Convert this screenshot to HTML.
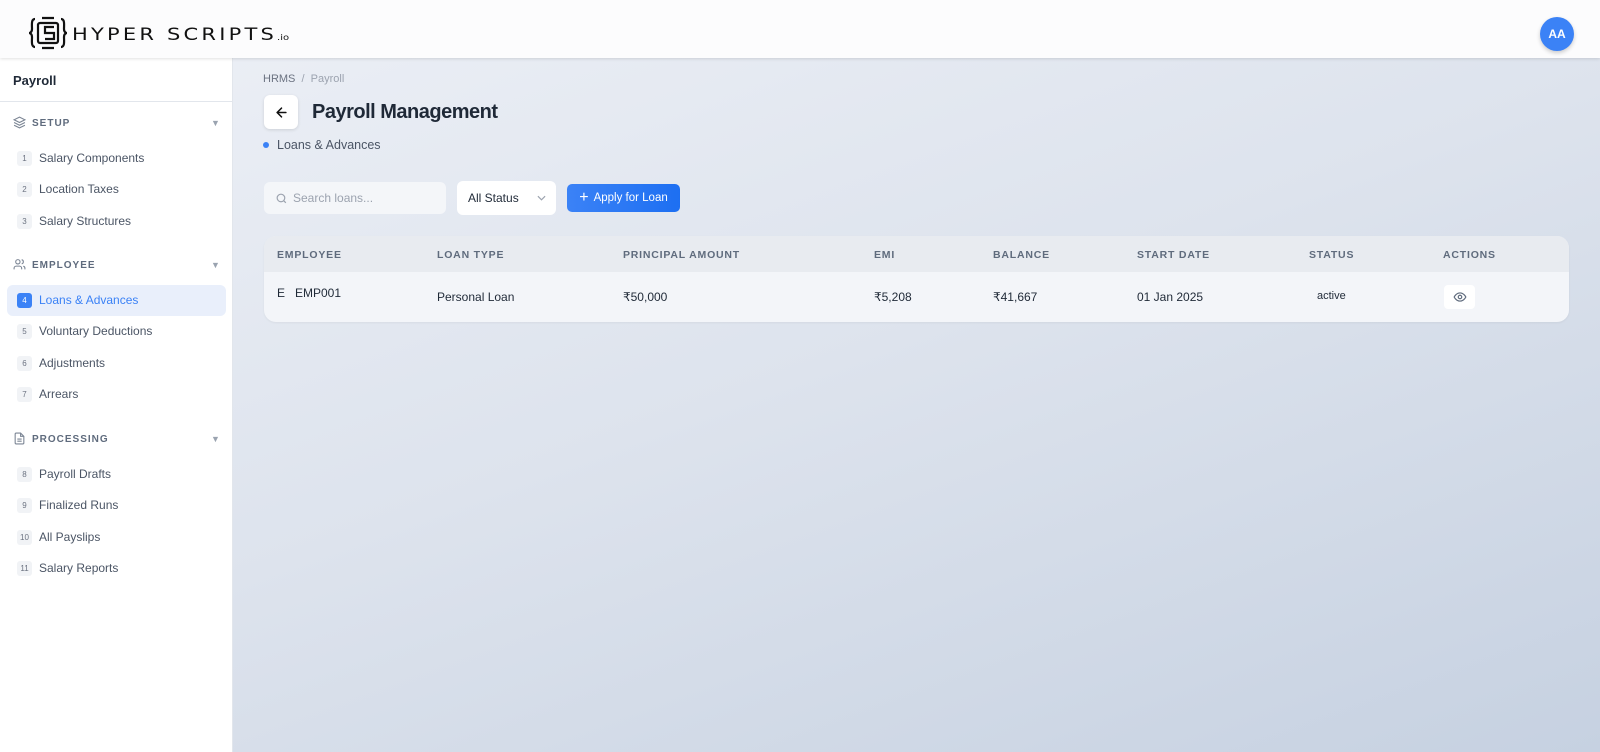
<!DOCTYPE html>
<html><head><meta charset="utf-8"><style>
*{box-sizing:border-box;margin:0;padding:0}
body{width:1600px;height:752px;overflow:hidden;font-family:"Liberation Sans",sans-serif;position:relative;background:linear-gradient(160deg,#eef1f7 0%,#dde3ed 50%,#c6d1e1 100%)}
.a{position:absolute}
.hdr{left:0;top:0;width:1600px;height:58px;background:#fcfcfd;box-shadow:0 1px 3px rgba(0,0,0,.12);z-index:2}
.side{left:0;top:58px;width:233px;height:694px;background:#fff;border-right:1px solid #e2e6ec}
.sec{font-size:10px;font-weight:bold;letter-spacing:1px;color:#5f6b7d;left:32px}
.arr{left:211px;font-size:9px;color:#9aa3b0}
.it{left:17px;font-size:12px;color:#4b5565;display:flex;align-items:center;height:20px}
.n{width:15px;height:15px;border-radius:3px;background:#f1f3f6;color:#6b7280;font-size:8px;display:inline-flex;align-items:center;justify-content:center;margin-right:7px}
.th{font-size:10.5px;font-weight:bold;letter-spacing:.8px;color:#5f6b7d;top:249px}
.td{font-size:12px;color:#1f2937;top:290px}
</style></head><body>
<div class="a hdr">
 <svg class="a" style="left:28px;top:16px" width="40" height="34" viewBox="0 0 40 34" fill="none" stroke="#111" stroke-width="2.2">
  <path d="M7 3C3 3 4 9 4 13s-3 4-3 4 3 0 3 4-1 10 3 10"/><path d="M33 3c4 0 3 6 3 10s3 4 3 4-3 0-3 4 1 10-3 10"/>
  <path d="M14 2h12M14 32h12"/><rect x="10" y="7" width="20" height="20" rx="2"/>
  <path d="M26 11h-9v6h9v6h-9"/></svg>
 <div class="a" style="left:72px;top:22px;font-size:21px;color:#111;letter-spacing:3.2px;font-family:'DejaVu Sans',sans-serif;line-height:24px;transform:scaleY(.8);transform-origin:left center">HYPER SCRIPTS<span style="font-size:10px;letter-spacing:0">.io</span></div>
 <div class="a" style="left:1540px;top:17px;width:34px;height:34px;border-radius:50%;background:#3b82f6;color:#fff;font-size:12px;font-weight:bold;display:flex;align-items:center;justify-content:center;box-shadow:0 2px 4px rgba(0,0,0,.2)">AA</div>
</div>
<div class="a side">
 <div class="a" style="left:13px;top:15px;font-size:13px;font-weight:bold;color:#1f2937">Payroll</div>
 <div class="a" style="left:0;top:43px;width:232px;border-top:1px solid #e2e6ec"></div>
 <svg class="a" style="left:13px;top:58px" width="13" height="13" viewBox="0 0 24 24" fill="none" stroke="#7b8594" stroke-width="2"><path d="M12 2 2 7l10 5 10-5-10-5z"/><path d="m2 12 10 5 10-5"/><path d="m2 17 10 5 10-5"/></svg>
 <div class="a sec" style="top:60px">SETUP</div><div class="a arr" style="top:60px">▼</div>
 <div class="a it" style="top:90px"><span class="n">1</span>Salary Components</div>
 <div class="a it" style="top:121px"><span class="n">2</span>Location Taxes</div>
 <div class="a it" style="top:153px"><span class="n">3</span>Salary Structures</div>
 <svg class="a" style="left:13px;top:200px" width="13" height="13" viewBox="0 0 24 24" fill="none" stroke="#7b8594" stroke-width="2"><circle cx="9" cy="7" r="4"/><path d="M2 21v-2a4 4 0 0 1 4-4h6a4 4 0 0 1 4 4v2"/><path d="M16 3.1a4 4 0 0 1 0 7.8M22 21v-2a4 4 0 0 0-3-3.9"/></svg>
 <div class="a sec" style="top:202px">EMPLOYEE</div><div class="a arr" style="top:202px">▼</div>
 <div class="a" style="left:7px;top:227px;width:219px;height:31px;border-radius:6px;background:#e9effb"></div>
 <div class="a it" style="top:232px;color:#3b82f6"><span class="n" style="background:#3b82f6;color:#fff">4</span>Loans &amp; Advances</div>
 <div class="a it" style="top:263px"><span class="n">5</span>Voluntary Deductions</div>
 <div class="a it" style="top:295px"><span class="n">6</span>Adjustments</div>
 <div class="a it" style="top:326px"><span class="n">7</span>Arrears</div>
 <svg class="a" style="left:13px;top:374px" width="13" height="13" viewBox="0 0 24 24" fill="none" stroke="#7b8594" stroke-width="2"><path d="M14 2H6a2 2 0 0 0-2 2v16a2 2 0 0 0 2 2h12a2 2 0 0 0 2-2V8z"/><path d="M14 2v6h6M8 13h8M8 17h8"/></svg>
 <div class="a sec" style="top:376px">PROCESSING</div><div class="a arr" style="top:376px">▼</div>
 <div class="a it" style="top:406px"><span class="n">8</span>Payroll Drafts</div>
 <div class="a it" style="top:437px"><span class="n">9</span>Finalized Runs</div>
 <div class="a it" style="top:469px"><span class="n">10</span>All Payslips</div>
 <div class="a it" style="top:500px"><span class="n">11</span>Salary Reports</div>
</div>
<div class="a" style="left:263px;top:73px;font-size:11px;color:#6b7280">HRMS <span style="color:#9ca3af">&nbsp;/&nbsp; Payroll</span></div>
<div class="a" style="left:264px;top:95px;width:34px;height:34px;border-radius:6px;background:#fff;box-shadow:0 1px 3px rgba(0,0,0,.12);display:flex;align-items:center;justify-content:center"><svg width="15" height="15" viewBox="0 0 24 24" fill="none" stroke="#111" stroke-width="2.5" stroke-linecap="round" stroke-linejoin="round"><path d="M19 12H5M12 19l-7-7 7-7"/></svg></div>
<div class="a" style="left:312px;top:101px;font-size:20px;font-weight:bold;color:#1f2937;letter-spacing:-.5px">Payroll Management</div>
<div class="a" style="left:263px;top:142px;width:6px;height:6px;border-radius:50%;background:#3b82f6"></div>
<div class="a" style="left:277px;top:138px;font-size:12.5px;color:#4b5565">Loans &amp; Advances</div>
<div class="a" style="left:264px;top:182px;width:182px;height:32px;border-radius:6px;background:#f4f6f9;display:flex;align-items:center;padding-left:11px;font-size:12px;color:#9ca3af"><svg width="13" height="13" viewBox="0 0 24 24" fill="none" stroke="#9ca3af" stroke-width="2.2" style="margin-right:5px"><circle cx="11" cy="11" r="7"/><path d="m20 20-4-4"/></svg>Search loans...</div>
<div class="a" style="left:457px;top:181px;width:99px;height:34px;border-radius:6px;background:#fff;display:flex;align-items:center;padding-left:11px;font-size:12px;color:#1f2937">All Status<svg class="a" style="left:80px;top:14px" width="9" height="6" viewBox="0 0 10 6" fill="none" stroke="#9ca3af" stroke-width="1.3"><path d="m1 1 4 4 4-4"/></svg></div>
<div class="a" style="left:567px;top:184px;width:113px;height:28px;border-radius:5px;background:linear-gradient(90deg,#3b82f6,#1d6ff2);display:flex;align-items:center;justify-content:center;font-size:11.5px;color:#fff"><span style="font-size:16px;margin-right:5px;line-height:1">+</span>Apply for Loan</div>
<div class="a" style="left:264px;top:236px;width:1305px;height:86px;border-radius:12px;background:#f3f5f9;overflow:hidden;box-shadow:0 1px 2px rgba(0,0,0,.05)">
 <div style="height:36px;background:#e8ebf0"></div>
</div>
<div class="a th" style="left:277px">EMPLOYEE</div>
<div class="a th" style="left:437px">LOAN TYPE</div>
<div class="a th" style="left:623px">PRINCIPAL AMOUNT</div>
<div class="a th" style="left:874px">EMI</div>
<div class="a th" style="left:993px">BALANCE</div>
<div class="a th" style="left:1137px">START DATE</div>
<div class="a th" style="left:1309px">STATUS</div>
<div class="a th" style="left:1443px">ACTIONS</div>
<div class="a td" style="left:277px;top:286px">E&nbsp;&nbsp; EMP001</div>
<div class="a td" style="left:437px">Personal Loan</div>
<div class="a td" style="left:623px">₹50,000</div>
<div class="a td" style="left:874px">₹5,208</div>
<div class="a td" style="left:993px">₹41,667</div>
<div class="a td" style="left:1137px">01 Jan 2025</div>
<div class="a td" style="left:1317px;font-size:11px">active</div>
<div class="a" style="left:1444px;top:285px;width:31px;height:24px;border-radius:4px;background:#fff;display:flex;align-items:center;justify-content:center"><svg width="14" height="14" viewBox="0 0 24 24" fill="none" stroke="#5f6b7d" stroke-width="2"><path d="M2 12s3.5-7 10-7 10 7 10 7-3.5 7-10 7S2 12 2 12z"/><circle cx="12" cy="12" r="3"/></svg></div>
</body></html>
